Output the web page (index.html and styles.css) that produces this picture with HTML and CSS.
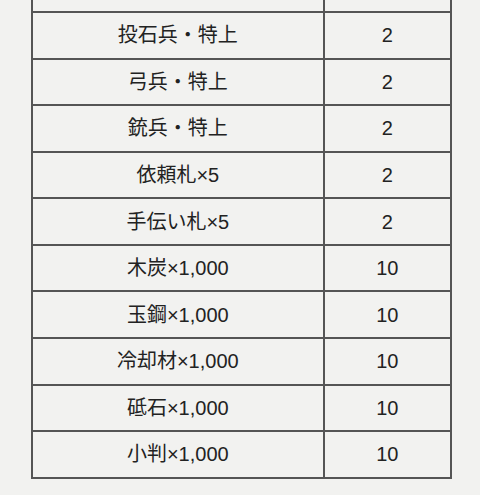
FILE: index.html
```html
<!DOCTYPE html>
<html lang="ja">
<head>
<meta charset="utf-8">
<link rel="stylesheet" href="styles.css">
</head>
<body>
<div class="wrap">
<table class="rewards">
<colgroup><col class="c-name"><col class="c-num"></colgroup>
<tbody>
<tr><td class="name"></td><td class="num"></td></tr>
<tr><td class="name">投石兵・特上</td><td class="num">2</td></tr>
<tr><td class="name">弓兵・特上</td><td class="num">2</td></tr>
<tr><td class="name">銃兵・特上</td><td class="num">2</td></tr>
<tr><td class="name">依頼札×5</td><td class="num">2</td></tr>
<tr><td class="name">手伝い札×5</td><td class="num">2</td></tr>
<tr><td class="name">木炭×1,000</td><td class="num">10</td></tr>
<tr><td class="name">玉鋼×1,000</td><td class="num">10</td></tr>
<tr><td class="name">冷却材×1,000</td><td class="num">10</td></tr>
<tr><td class="name">砥石×1,000</td><td class="num">10</td></tr>
<tr><td class="name">小判×1,000</td><td class="num">10</td></tr>
</tbody>
</table>
</div>
</body>
</html>
```

FILE: styles.css
```css
html, body {
  margin: 0;
  padding: 0;
  background: #f2f2f0;
}
body {
  font-family: "Liberation Sans", "Noto Sans CJK JP", sans-serif;
  font-size: 20px;
  color: #222;
  overflow: hidden;
  height: 495px;
}
.wrap {
  padding-left: 31px;
}
.rewards {
  border-collapse: collapse;
  width: 421px;
  margin-top: -35.5px;
  table-layout: fixed;
}
.c-name {
  width: 69.6%;
}
.c-num {
  width: 30.4%;
}
.rewards td {
  border: 2px solid #555;
  height: 44.57px;
  padding: 0;
  text-align: center;
  vertical-align: middle;
  line-height: 1;
}
```
